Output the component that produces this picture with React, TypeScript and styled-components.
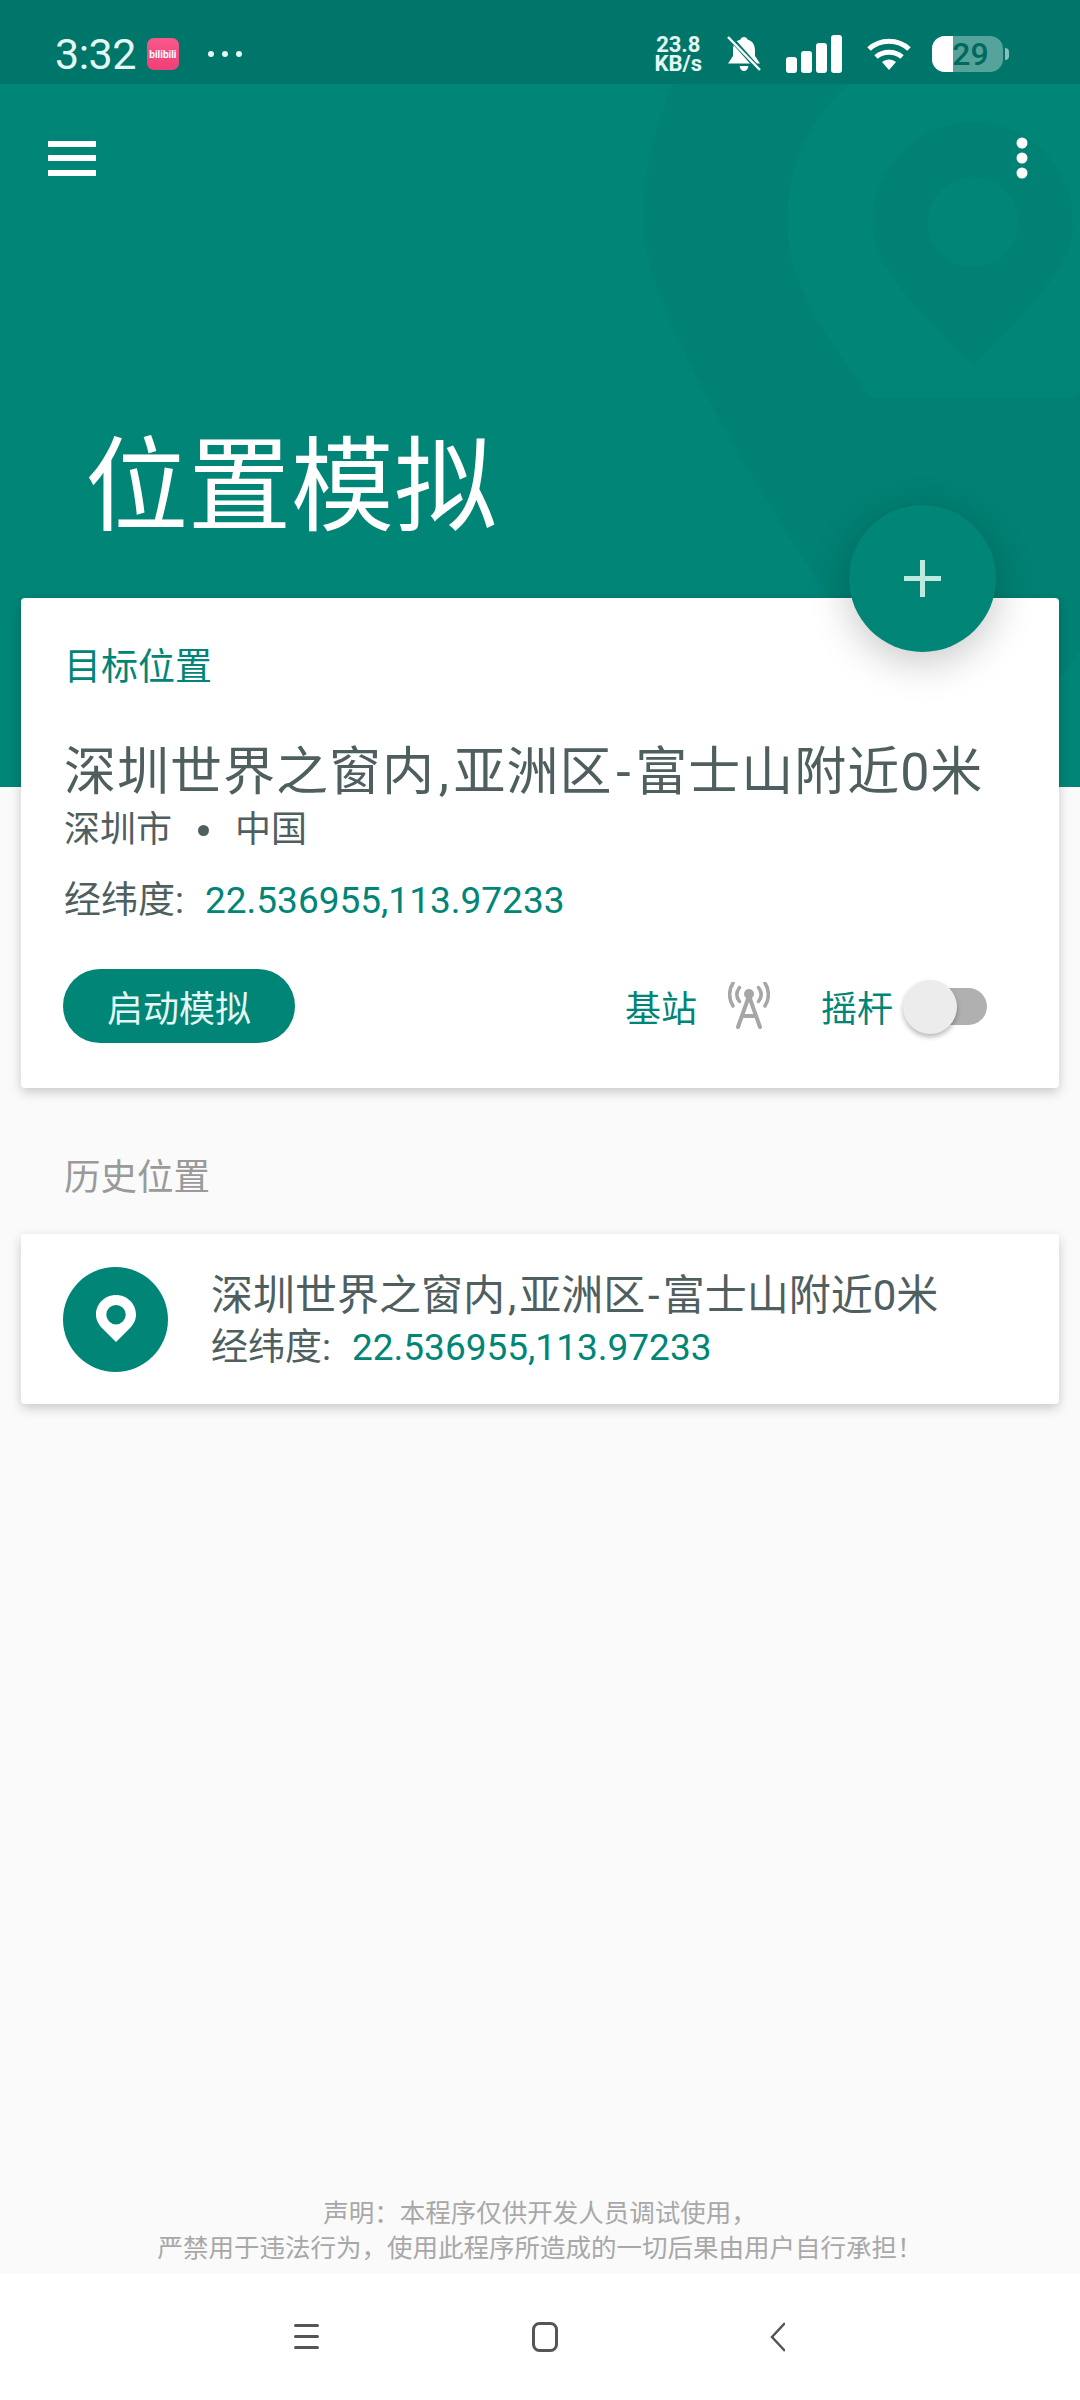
import React from 'react';
import styled, { createGlobalStyle } from 'styled-components';

const teal = '#008577';
const slate = '#4f5f5f';
const cjk = `Roboto, 'Noto Sans CJK SC', sans-serif`;

const Global = createGlobalStyle`
  html, body {
    margin: 0;
    padding: 0;
    background: #fafafa;
  }
  * {
    box-sizing: border-box;
  }
`;

const MenuIcon = () => (
  <svg width="48" height="35" viewBox="0 0 48 35" fill="#fff">
    <rect x="0" y="0" width="48" height="6" />
    <rect x="0" y="14" width="48" height="6" />
    <rect x="0" y="29" width="48" height="6" />
  </svg>
);

const MoreIcon = () => (
  <svg width="12" height="42" viewBox="0 0 12 42" fill="#fff">
    <circle cx="6" cy="6" r="5.5" />
    <circle cx="6" cy="21" r="5.5" />
    <circle cx="6" cy="36" r="5.5" />
  </svg>
);

const PinIcon = () => (
  <svg width="40" height="48" viewBox="0 0 40 48">
    <path
      fill="#fff"
      fillRule="evenodd"
      d="M20 0C9 0 0 8.600 0 19.500 0 25.500 3 30 6.500 33.500L20 47 33.500 33.500C37 30 40 25.500 40 19.500 40 8.600 31 0 20 0ZM20 10a9.700 9.700 0 1 1 0 19.400 9.700 9.700 0 0 1 0-19.400Z"
    />
  </svg>
);

const TowerIcon = () => (
  <svg width="42" height="48" viewBox="0 0 42 48" fill="none" stroke="#a6a6a6" strokeLinecap="round">
    <circle cx="21" cy="12" r="5" fill="#a6a6a6" stroke="none" />
    <path strokeWidth="4" d="M21 14L10 45M21 14L32 45M14.500 34H27.500" />
    <path strokeWidth="3.500" d="M11.500 5.500C8 10 8 15 11.500 19.500M30.500 5.500C34 10 34 15 30.500 19.500" />
    <path strokeWidth="3.500" d="M5 1C0.500 8 0.500 17 5 24M37 1C41.500 8 41.500 17 37 24" />
  </svg>
);

const BellOffIcon = () => (
  <svg width="34" height="36" viewBox="0 0 34 36">
    <path
      fill="#fff"
      d="M17 1c2 0 3 1 3.500 2.500C26 5 28 9.500 28 15v5l5 7.500H1L6 20v-6c0-5 2-9 7.500-10.500C14 2 15 1 17 1ZM12.500 30h9c-.5 3-2.300 5-4.500 5s-4-2-4.500-5Z"
    />
    <path stroke="#00766a" strokeWidth="5" d="M1 -1L34 36" />
    <path stroke="#fff" strokeWidth="2.500" d="M1 1L33 34" />
  </svg>
);

const SignalIcon = () => (
  <svg width="56" height="38" viewBox="0 0 56 38" fill="#fff">
    <rect x="0" y="22" width="11" height="16" rx="3" />
    <rect x="15" y="16" width="11" height="22" rx="3" />
    <rect x="30" y="8" width="11" height="30" rx="3" />
    <rect x="45" y="0" width="11" height="38" rx="3" />
  </svg>
);

const WifiIcon = () => (
  <svg width="44" height="34" viewBox="0 0 44 34" fill="none" stroke="#fff" strokeWidth="5">
    <path d="M2 12C13 1.500 31 1.500 42 12" />
    <path d="M9 20C16 13.500 28 13.500 35 20" />
    <path fill="#fff" stroke="none" d="M15 25C19 21.500 25 21.500 29 25L22 33Z" />
  </svg>
);

const LauncherBars = () => (
  <svg width="25" height="26" viewBox="0 0 25 26" fill="#555">
    <rect y="0" width="25" height="3" rx="1.500" />
    <rect y="11" width="25" height="3" rx="1.500" />
    <rect y="22" width="25" height="3" rx="1.500" />
  </svg>
);

const LauncherHome = () => (
  <svg width="26" height="30" viewBox="0 0 26 30" fill="none" stroke="#555" strokeWidth="3">
    <rect x="1.500" y="1.500" width="23" height="27" rx="6" />
  </svg>
);

const LauncherBack = () => (
  <svg width="15" height="30" viewBox="0 0 15 30" fill="none" stroke="#555" strokeWidth="2.500">
    <path d="M15 1L2 15L15 29" />
  </svg>
);

// concentric pin shapes, barely darker than the header, in page coordinates
const HeroWatermark = () => (
  <Watermark viewBox="600 84 480 703">
    <path fill="#008173" d="M643 222A330 330 0 0 1 1303 222C1303 330 1100 640 973 790C846 640 643 330 643 222Z" />
    <path fill="#008577" d="M787 222A186 186 0 0 1 1159 222C1159 280 1120 340 1075 397H871C826 340 787 280 787 222Z" />
    <path
      fill="#008173"
      fillRule="evenodd"
      d="M973 122C918 122 873 167 873 222C873 262 900 292 973 366C1046 292 1073 262 1073 222C1073 167 1028 122 973 122ZM973 177A45 45 0 1 1 973 267A45 45 0 1 1 973 177Z"
    />
  </Watermark>
);

const PlaceText = () => (
  <>
    深圳世界之窗内<Sep>,</Sep>亚洲区<Sep>-</Sep>富士山附近0米
  </>
);

export default function App() {
  return (
    <Screen>
      <Global />
      <Hero>
        <HeroWatermark />
        <StatusBar>
          <StatusLeft>
            <Clock>3:32</Clock>
            <AppBadge>bilibili</AppBadge>
            <Dots>
              <Dot />
              <Dot />
              <Dot />
            </Dots>
          </StatusLeft>
          <StatusRight>
            <NetSpeed>
              <span>23.8</span>
              <span>KB/s</span>
            </NetSpeed>
            <BellOffIcon />
            <SignalIcon />
            <WifiIcon />
            <Battery>
              <BatteryBody>
                <BatteryFill />
                <BatteryLevel>29</BatteryLevel>
              </BatteryBody>
              <BatteryTip />
            </Battery>
          </StatusRight>
        </StatusBar>
        <Toolbar>
          <MenuIcon />
          <MoreIcon />
        </Toolbar>
        <PageTitle>位置模拟</PageTitle>
      </Hero>

      <Content>
        <TargetCard>
          <Fab>
            <FabPlus />
          </Fab>
          <CardLabel>目标位置</CardLabel>
          <PlaceName>
            <PlaceText />
          </PlaceName>
          <PlaceRegion>
            <span>深圳市</span>
            <RegionDot />
            <span>中国</span>
          </PlaceRegion>
          <CoordRow>
            经纬度:<Coord>22.536955,113.97233</Coord>
          </CoordRow>
          <Actions>
            <StartButton>启动模拟</StartButton>
            <Options>
              <OptionLabel>基站</OptionLabel>
              <TowerSlot>
                <TowerIcon />
              </TowerSlot>
              <OptionLabel>摇杆</OptionLabel>
              <Switch>
                <SwitchKnob />
              </Switch>
            </Options>
          </Actions>
        </TargetCard>

        <SectionTitle>历史位置</SectionTitle>

        <HistoryCard>
          <PinCircle>
            <PinIcon />
          </PinCircle>
          <HistoryText>
            <HistoryName>
              <PlaceText />
            </HistoryName>
            <CoordRow $tight>
              经纬度:<Coord>22.536955,113.97233</Coord>
            </CoordRow>
          </HistoryText>
        </HistoryCard>

        <Disclaimer>
          <div>{'声明\uFF1A本程序仅供开发人员调试使用\uFF0C'}</div>
          <div>{'严禁用于违法行为\uFF0C使用此程序所造成的一切后果由用户自行承担\uFF01'}</div>
        </Disclaimer>
      </Content>

      <NavBar>
        <LauncherBars />
        <LauncherHome />
        <LauncherBack />
      </NavBar>
    </Screen>
  );
}

const Screen = styled.div`
  width: 1080px;
  height: 2400px;
  display: flex;
  flex-direction: column;
  position: relative;
  overflow: hidden;
  background: #fafafa;
  font-family: ${cjk};
`;

const Hero = styled.div`
  height: 787px;
  flex: none;
  display: flex;
  flex-direction: column;
  position: relative;
  background: ${teal};
`;

const Watermark = styled.svg`
  position: absolute;
  top: 84px;
  left: 600px;
  width: 480px;
  height: 703px;
`;

const StatusBar = styled.div`
  height: 84px;
  flex: none;
  padding: 24px 71px 0 55px;
  display: flex;
  justify-content: space-between;
  align-items: center;
  position: relative;
  background: #00766a;
`;

const StatusLeft = styled.div`
  display: flex;
  align-items: center;
  gap: 11px;
`;

const Clock = styled.div`
  font-family: Roboto, sans-serif;
  font-size: 43px;
  letter-spacing: -0.5px;
  color: #e4f7f3;
`;

const AppBadge = styled.div`
  width: 32px;
  height: 32px;
  display: flex;
  align-items: center;
  justify-content: center;
  overflow: hidden;
  border-radius: 7px;
  font-family: Roboto, sans-serif;
  font-size: 10px;
  font-weight: 700;
  color: #fff;
  background: linear-gradient(#f7588a, #ef3f77);
`;

const Dots = styled.div`
  display: flex;
  gap: 8px;
  margin-left: 18px;
`;

const Dot = styled.i`
  width: 6px;
  height: 6px;
  border-radius: 50%;
  background: #e4f7f3;
`;

const StatusRight = styled.div`
  display: flex;
  align-items: center;
  gap: 25px;
`;

const NetSpeed = styled.div`
  display: flex;
  flex-direction: column;
  align-items: center;
  font-family: Roboto, sans-serif;
  font-size: 22px;
  font-weight: 700;
  line-height: 19px;
  color: #e4f7f3;
`;

const Battery = styled.div`
  margin-left: -4px;
  display: flex;
  align-items: center;
  gap: 2px;
`;

const BatteryBody = styled.div`
  width: 71px;
  height: 36px;
  padding-left: 6px;
  border-radius: 13px;
  overflow: hidden;
  display: flex;
  align-items: center;
  justify-content: center;
  position: relative;
  background: #ffffff55;
`;

const BatteryFill = styled.div`
  position: absolute;
  top: 0;
  bottom: 0;
  left: 0;
  width: 21px;
  background: #fff;
`;

const BatteryLevel = styled.span`
  font-family: Roboto, sans-serif;
  font-size: 32px;
  font-weight: 500;
  color: #00695e;
  position: relative;
`;

const BatteryTip = styled.div`
  width: 4px;
  height: 12px;
  border-radius: 0 4px 4px 0;
  background: #ffffff88;
`;

const Toolbar = styled.div`
  padding: 53px 52px 0 48px;
  display: flex;
  justify-content: space-between;
  align-items: center;
  position: relative;
`;

const PageTitle = styled.div`
  margin: 249px 0 0 85px;
  font-size: 103px;
  line-height: 120px;
  color: #fff;
  position: relative;
`;

const Content = styled.div`
  flex: 1;
  margin-top: -189px;
  padding: 0 21px;
  display: flex;
  flex-direction: column;
  position: relative;
`;

const TargetCard = styled.div`
  height: 490px;
  padding: 47px 42px 0 43px;
  display: flex;
  flex-direction: column;
  position: relative;
  background: #fff;
  border-radius: 4px;
  box-shadow: 0 4px 12px rgba(0, 0, 0, 0.2);
`;

const Fab = styled.div`
  width: 147px;
  height: 147px;
  position: absolute;
  top: -93px;
  right: 63px;
  display: flex;
  align-items: center;
  justify-content: center;
  border-radius: 50%;
  background: ${teal};
  box-shadow: 0 10px 40px rgba(0, 0, 0, 0.22);
`;

const FabPlus = styled.div`
  width: 37px;
  height: 37px;
  background:
    linear-gradient(#bdeadf, #bdeadf) center / 37px 5px no-repeat,
    linear-gradient(#bdeadf, #bdeadf) center / 5px 37px no-repeat;
`;

const CardLabel = styled.div`
  font-size: 37px;
  line-height: 46px;
  color: ${teal};
`;

const PlaceName = styled.div`
  margin-top: 51px;
  font-size: 52px;
  line-height: 62px;
  letter-spacing: 1px;
  white-space: nowrap;
  color: ${slate};
`;

const Sep = styled.span`
  margin: 0 0.07em;
`;

const PlaceRegion = styled.div`
  margin-top: 1px;
  display: flex;
  align-items: center;
  gap: 26px;
  font-size: 36px;
  line-height: 50px;
  color: ${slate};
`;

const RegionDot = styled.i`
  width: 11px;
  height: 11px;
  border-radius: 50%;
  background: ${slate};
`;

const CoordRow = styled.div<{ $tight?: boolean }>`
  margin-top: ${(p) => (p.$tight ? '0' : '21px')};
  font-size: 37px;
  line-height: 50px;
  white-space: nowrap;
  color: ${slate};
`;

const Coord = styled.span`
  margin-left: 21px;
  color: ${teal};
`;

const Actions = styled.div`
  margin-top: 43px;
  display: flex;
  justify-content: space-between;
  align-items: center;
`;

const StartButton = styled.div`
  width: 232px;
  height: 74px;
  margin-left: -1px;
  display: flex;
  align-items: center;
  justify-content: center;
  border-radius: 37px;
  font-size: 36px;
  color: #e4f7f3;
  background: ${teal};
`;

const Options = styled.div`
  display: flex;
  align-items: center;
`;

const OptionLabel = styled.div`
  font-size: 36px;
  color: ${teal};
`;

const TowerSlot = styled.div`
  width: 104px;
  display: flex;
  justify-content: center;
  margin-right: 20px;
`;

const Switch = styled.div`
  width: 79px;
  height: 37px;
  margin-left: 15px;
  margin-right: 30px;
  position: relative;
  border-radius: 19px;
  background: #b0b0b0;
`;

const SwitchKnob = styled.div`
  width: 54px;
  height: 54px;
  position: absolute;
  top: -8px;
  left: -5px;
  border-radius: 50%;
  background: #ececec;
  box-shadow: 0 3px 5px rgba(0, 0, 0, 0.28);
`;

const SectionTitle = styled.div`
  margin: 65px 0 0 43px;
  font-size: 36.500px;
  line-height: 50px;
  color: #9a9a9a;
`;

const HistoryCard = styled.div`
  height: 170px;
  margin-top: 31px;
  padding: 0 42px;
  display: flex;
  align-items: center;
  gap: 43px;
  background: #fff;
  border-radius: 4px;
  box-shadow: 0 4px 12px rgba(0, 0, 0, 0.2);
`;

const PinCircle = styled.div`
  width: 105px;
  height: 105px;
  flex: none;
  display: flex;
  align-items: center;
  justify-content: center;
  border-radius: 50%;
  background: ${teal};
`;

const HistoryText = styled.div`
  margin-top: 3px;
  display: flex;
  flex-direction: column;
`;

const HistoryName = styled.div`
  font-size: 42px;
  line-height: 54px;
  white-space: nowrap;
  color: ${slate};
`;

const Disclaimer = styled.div`
  margin-top: auto;
  padding-bottom: 8px;
  text-align: center;
  font-size: 25.500px;
  line-height: 35px;
  color: #a8a8a8;
`;

const NavBar = styled.div`
  height: 126px;
  flex: none;
  padding: 0 295px 0 294px;
  display: flex;
  justify-content: space-between;
  align-items: center;
  background: #fff;
`;
